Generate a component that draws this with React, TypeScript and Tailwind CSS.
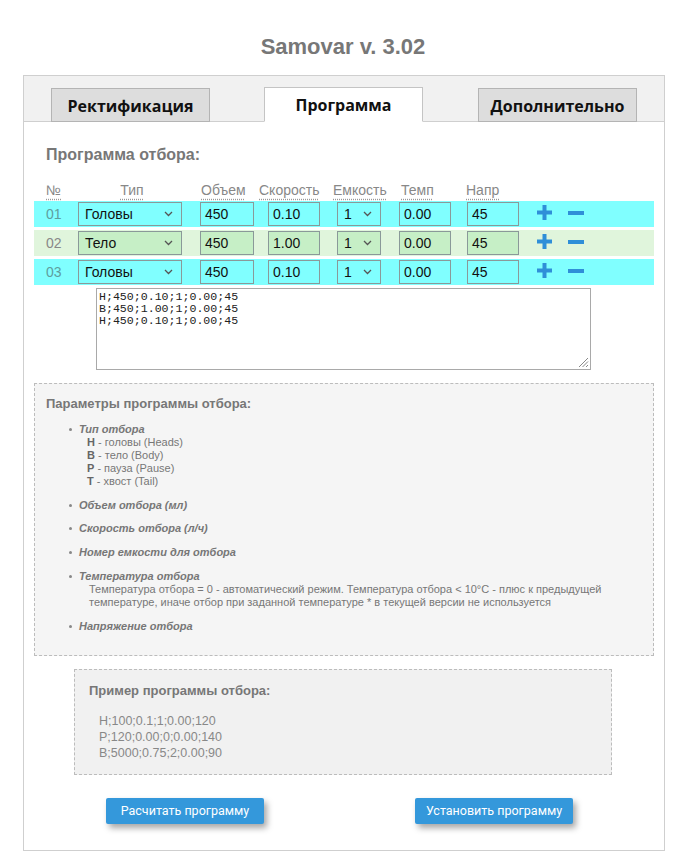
import React from "react";

const rows = [
  { n: "01", type: "Головы", vol: "450", speed: "0.10", tank: "1", temp: "0.00", volt: "45", green: false },
  { n: "02", type: "Тело", vol: "450", speed: "1.00", tank: "1", temp: "0.00", volt: "45", green: true },
  { n: "03", type: "Головы", vol: "450", speed: "0.10", tank: "1", temp: "0.00", volt: "45", green: false },
];

function Chevron() {
  return (
    <svg width="9" height="6" viewBox="0 0 9 6" className="shrink-0">
      <path d="M1 1 L4.5 4.5 L8 1" fill="none" stroke="#555" strokeWidth="1.3" />
    </svg>
  );
}

function Field({ w, value, green, select }: { w: string; value: string; green: boolean; select?: boolean }) {
  return (
    <div
      className={`${w} h-[24px] flex items-center justify-between border border-[#8a9999] text-[14px] text-[#111] ${
        green ? "bg-[#c6efc6]" : "bg-[#80ffff]"
      } ${select ? "pl-[6px] pr-[8px]" : "pl-[4px]"}`}
    >
      <span>{value}</span>
      {select ? <Chevron /> : null}
    </div>
  );
}

function Plus() {
  return (
    <svg width="15" height="15" viewBox="0 0 15 15">
      <rect x="5.5" y="0" width="4" height="15" fill="#2f8fd8" />
      <rect x="0" y="5.5" width="15" height="4" fill="#2f8fd8" />
    </svg>
  );
}
function Minus() {
  return (
    <svg width="16" height="4" viewBox="0 0 16 4">
      <rect x="0" y="0" width="16" height="4" fill="#2f8fd8" />
    </svg>
  );
}

function Header({ w, children, cls }: { w: string; children: React.ReactNode; cls?: string }) {
  return (
    <div className={`${w} shrink-0`}>
      <span className={`inline-block underline decoration-dotted decoration-[#999] underline-offset-[4px] ${cls ?? ""}`}>
        {children}
      </span>
    </div>
  );
}

export default function App() {
  return (
    <div className="min-h-screen bg-white" style={{ fontFamily: '"Liberation Sans", Arial, sans-serif' }}>
      <h1 className="pt-[34px] pl-[2px] text-center text-[22px] leading-[26px] font-bold text-[#777]">Samovar v. 3.02</h1>
      <div className="ml-[23px] mt-[15px] w-[642px] border border-[#cfcfcf]">
        {/* tab bar */}
        <div className="h-[46px] bg-[#f1f1f1] border-b border-[#cfcfcf] flex items-end pl-[27px]" style={{ fontFamily: '"Open Sans", Roboto, sans-serif' }}>
          <div className="w-[159px] h-[34px] mb-[-1px] pt-[1px] bg-[#dddddd] border border-[#b4b4b4] flex items-center justify-center text-[16px] font-bold text-[#111]">
            Ректификация
          </div>
          <div className="ml-[54px] w-[159px] h-[35px] mb-[-1px] pt-[1px] bg-white border border-[#c4c4c4] border-b-white flex items-center justify-center text-[16px] font-bold text-[#111]">
            Программа
          </div>
          <div className="ml-[55px] w-[159px] h-[34px] mb-[-1px] pt-[1px] bg-[#dddddd] border border-[#b4b4b4] flex items-center justify-center text-[16px] font-bold text-[#111]">
            Дополнительно
          </div>
        </div>

        {/* content */}
        <div className="pt-[23px] px-[10px] pb-[26px]">
          <div className="pl-[12px] text-[16px] leading-[20px] font-bold text-[#777]">Программа отбора:</div>

          {/* headers */}
          <div className="mt-[15px] flex h-[20px] leading-[20px] text-[14px] text-[#888]">
            <Header w="w-[44px]" cls="ml-[12px]">№</Header>
            <div className="w-[122px] shrink-0">
              <div className="w-[108px] text-center">
                <span className="underline decoration-dotted decoration-[#999] underline-offset-[4px]">Тип</span>
              </div>
            </div>
            <Header w="w-[68px]" cls="ml-[1px]">Объем</Header>
            <Header w="w-[69px]" cls="ml-[-9px]">Скорость</Header>
            <Header w="w-[62px]" cls="ml-[-4px]">Емкость</Header>
            <Header w="w-[68px]" cls="ml-[2px]">Темп</Header>
            <Header w="w-[70px]" cls="ml-[-1px]">Напр</Header>
          </div>

          {/* rows */}
          <div className="mt-[1px] flex flex-col gap-[3px]">
            {rows.map((r) => (
              <div key={r.n} className={`flex h-[26px] items-center ${r.green ? "bg-[#e0f5dc]" : "bg-[#80ffff]"}`}>
                <div className={`w-[44px] shrink-0 pl-[12px] text-[14px] ${r.green ? "text-[#888]" : "text-[#5e9e9e]"}`}>{r.n}</div>
                <div className="w-[122px] shrink-0"><Field w="w-[104px]" value={r.type} green={r.green} select /></div>
                <div className="w-[68px] shrink-0"><Field w="w-[54px]" value={r.vol} green={r.green} /></div>
                <div className="w-[69px] shrink-0"><Field w="w-[52px]" value={r.speed} green={r.green} /></div>
                <div className="w-[62px] shrink-0"><Field w="w-[44px]" value={r.tank} green={r.green} select /></div>
                <div className="w-[68px] shrink-0"><Field w="w-[52px]" value={r.temp} green={r.green} /></div>
                <div className="w-[70px] shrink-0"><Field w="w-[52px]" value={r.volt} green={r.green} /></div>
                <div className="flex items-center mt-[-3px]">
                  <Plus />
                  <div className="ml-[16px]"><Minus /></div>
                </div>
              </div>
            ))}
          </div>

          {/* textarea */}
          <div className="relative mt-[3px] ml-[62px] w-[495px] h-[82px] border border-[#a9a9a9] bg-white px-[2px] pt-[2px]">
            <pre className="text-[11.6px] leading-[12px] text-[#222]" style={{ fontFamily: '"Liberation Mono", "Courier New", monospace' }}>
{`H;450;0.10;1;0.00;45
B;450;1.00;1;0.00;45
H;450;0.10;1;0.00;45`}
            </pre>
            <svg className="absolute right-[1px] bottom-[1px]" width="12" height="12" viewBox="0 0 12 12">
              <path d="M11 2 L2 11 M11 5.5 L5.5 11 M11 9 L9 11" stroke="#888" strokeWidth="1" />
            </svg>
          </div>

          {/* params box */}
          <div className="mt-[13px] border border-dashed border-[#bcbcbc] bg-[#f5f5f5] pt-[12px] pl-[11px] pr-[12px] pb-[22px] text-[#777]">
            <div className="text-[13px] leading-[16px] font-bold text-[#777]">Параметры программы отбора:</div>
            <ul className="mt-[11px] ml-[23px] text-[11px] leading-[13px]">
              <li className="flex mb-[11px]">
                <span className="w-[10px] shrink-0 pt-[5px]"><span className="block w-[3px] h-[3px] rounded-full bg-[#888]" /></span>
                <div>
                  <div className="italic font-bold text-[#777]">Тип отбора</div>
                  <div className="ml-[8px] text-[#777]">
                    <div><b className="text-[#666]">H</b> - головы (Heads)</div>
                    <div><b className="text-[#666]">B</b> - тело (Body)</div>
                    <div><b className="text-[#666]">P</b> - пауза (Pause)</div>
                    <div><b className="text-[#666]">T</b> - хвост (Tail)</div>
                  </div>
                </div>
              </li>
              <li className="flex mb-[10px]">
                <span className="w-[10px] shrink-0 pt-[5px]"><span className="block w-[3px] h-[3px] rounded-full bg-[#888]" /></span>
                <div className="italic font-bold text-[#777]">Объем отбора (мл)</div>
              </li>
              <li className="flex mb-[11px]">
                <span className="w-[10px] shrink-0 pt-[5px]"><span className="block w-[3px] h-[3px] rounded-full bg-[#888]" /></span>
                <div className="italic font-bold text-[#777]">Скорость отбора (л/ч)</div>
              </li>
              <li className="flex mb-[11px]">
                <span className="w-[10px] shrink-0 pt-[5px]"><span className="block w-[3px] h-[3px] rounded-full bg-[#888]" /></span>
                <div className="italic font-bold text-[#777]">Номер емкости для отбора</div>
              </li>
              <li className="flex mb-[11px]">
                <span className="w-[10px] shrink-0 pt-[5px]"><span className="block w-[3px] h-[3px] rounded-full bg-[#888]" /></span>
                <div>
                  <div className="italic font-bold text-[#777]">Температура отбора</div>
                  <div className="ml-[10px] text-[#777]">
                    Температура отбора = 0 - автоматический режим. Температура отбора &lt; 10°C - плюс к предыдущей температуре, иначе отбор при заданной температуре * в текущей версии не используется
                  </div>
                </div>
              </li>
              <li className="flex">
                <span className="w-[10px] shrink-0 pt-[5px]"><span className="block w-[3px] h-[3px] rounded-full bg-[#888]" /></span>
                <div className="italic font-bold text-[#777]">Напряжение отбора</div>
              </li>
            </ul>
          </div>

          {/* example box */}
          <div className="mt-[13px] ml-[40px] w-[538px] border border-dashed border-[#bcbcbc] bg-[#f1f1f1] pt-[13px] pl-[14px] pb-[13px]">
            <div className="text-[13px] leading-[16px] font-bold text-[#777]">Пример программы отбора:</div>
            <div className="mt-[14px] ml-[10px] text-[12.5px] leading-[16px] text-[#888]">
              <div>H;100;0.1;1;0.00;120</div>
              <div>P;120;0.00;0;0.00;140</div>
              <div>B;5000;0.75;2;0.00;90</div>
            </div>
          </div>

          {/* buttons */}
          <div className="mt-[23px] ml-[72px] flex" style={{ fontFamily: 'Roboto, "Noto Sans", sans-serif' }}>
            <button className="w-[158px] h-[26px] rounded-[2px] bg-[#3498db] text-white text-[12.5px] shadow-[3px_4px_6px_rgba(0,0,0,0.35)]">
              Расчитать программу
            </button>
            <button className="ml-[151px] w-[158px] h-[26px] rounded-[2px] bg-[#3498db] text-white text-[12.5px] shadow-[3px_4px_6px_rgba(0,0,0,0.35)]">
              Установить программу
            </button>
          </div>
        </div>
      </div>
    </div>
  );
}
